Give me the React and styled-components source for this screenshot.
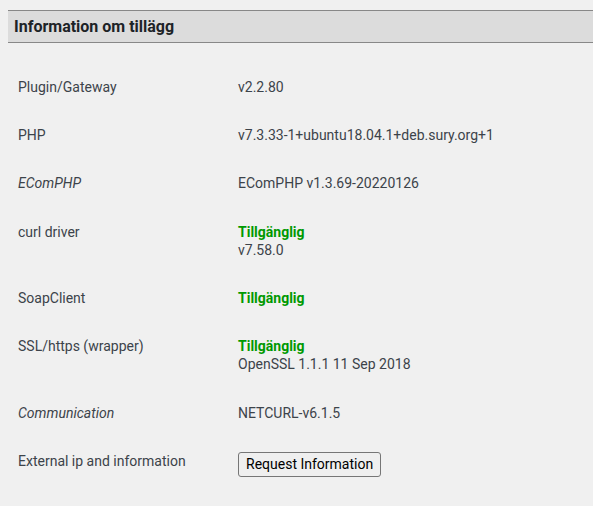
import React from "react";
import styled, { createGlobalStyle } from "styled-components";

const GlobalStyle = createGlobalStyle`
  html, body {
    background: #f0f0f0;
  }
  body {
    margin: 10px 0 8px 8px;
    font-family: Roboto, "Liberation Sans", sans-serif;
    font-size: 14px;
    color: #3c434a;
  }
`;

const Panel = styled.div`
  width: 100%;
`;

const Header = styled.h2`
  margin: 0;
  padding: 0 6px;
  height: 31px;
  line-height: 31px;
  background: #dcdcdc;
  border-top: 1px solid #888;
  border-bottom: 1px solid #888;
  font-size: 16px;
  font-weight: 700;
  color: #1d2327;
`;

const Table = styled.div`
  display: grid;
  grid-template-columns: 230px 1fr;
  margin-top: 20px;
`;

const Label = styled.div`
  padding: 15px 10px;
  line-height: 1.3;
  font-style: ${props => (props.italic ? "italic" : "normal")};
`;

const Value = styled.div`
  padding: 15px 0;
  line-height: 1.3;
`;

const Status = styled.div`
  color: #009900;
  font-weight: 700;
`;

const Button = styled.button`
  font-family: Roboto, "Liberation Sans", sans-serif;
  font-size: 14px;
  color: #000;
  background: #efefef;
  border: 1px solid #767676;
  border-radius: 3px;
  height: 25px;
  padding: 0 7px;
  margin: 0;
  cursor: pointer;
`;

const rows = [
  { label: "Plugin/Gateway", value: "v2.2.80" },
  { label: "PHP", value: "v7.3.33-1+ubuntu18.04.1+deb.sury.org+1" },
  { label: "EComPHP", italic: true, value: "EComPHP v1.3.69-20220126" },
  { label: "curl driver", status: true, value: "v7.58.0" },
  { label: "SoapClient", status: true },
  { label: "SSL/https (wrapper)", status: true, value: "OpenSSL 1.1.1 11 Sep 2018" },
  { label: "Communication", italic: true, value: "NETCURL-v6.1.5" }
];

export default function App() {
  return (
    <>
      <GlobalStyle />
      <Panel>
        <Header>Information om tillägg</Header>
        <Table>
          {rows.map(row => (
            <React.Fragment key={row.label}>
              <Label italic={row.italic}>{row.label}</Label>
              <Value>
                {row.status ? <Status>Tillgänglig</Status> : null}
                {row.value ? <div>{row.value}</div> : null}
              </Value>
            </React.Fragment>
          ))}
          <Label>External ip and information</Label>
          <Value>
            <Button>Request Information</Button>
          </Value>
        </Table>
      </Panel>
    </>
  );
}
